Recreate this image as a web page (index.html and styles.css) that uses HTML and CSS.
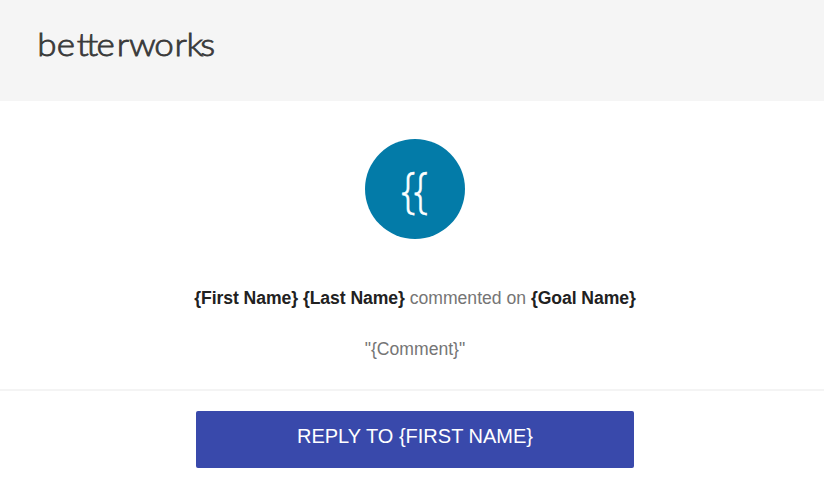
FILE: index.html
```html
<!DOCTYPE html>
<html lang="en">
<head>
<meta charset="utf-8">
<title>Betterworks</title>
<link rel="stylesheet" href="styles.css">
</head>
<body>
<header class="header">
  <svg class="logo" width="190" height="40" role="img" aria-label="betterworks">
    <text class="wordmark" transform="scale(1.13 1)" x="0.2 17.4 35.2 43.6 52.7 70.6 81.4 103.7 121.6 132.4 144.4" y="29">betterworks</text>
  </svg>
</header>
<main>
  <section class="message">
    <div class="avatar"><span class="initials">{{</span></div>
    <p class="summary"><strong>{First Name}</strong> <strong>{Last Name}</strong> commented on <strong>{Goal Name}</strong></p>
    <p class="comment">"{Comment}"</p>
  </section>
  <section class="actions">
    <a class="reply">REPLY TO {FIRST NAME}</a>
  </section>
</main>
</body>
</html>
```
FILE: styles.css
```css
* { box-sizing: border-box; }
body {
  margin: 0;
  height: 477px;
  overflow: hidden;
  background: #fff;
  color: #757575;
  font-family: "Liberation Sans", Arial, sans-serif;
  font-size: 17.6px;
}
.header {
  height: 101px;
  padding: 27px 0 0 37px;
  background: #f5f5f5;
}
.logo { display: block; overflow: visible; }
.wordmark {
  font-family: Lato, sans-serif;
  font-size: 31px;
  font-weight: 300;
  fill: #3a3a3a;
  stroke: #3a3a3a;
  stroke-width: 0.8px;
}
.message {
  display: flex;
  flex-direction: column;
  align-items: center;
  height: 290px;
  padding: 38px 0 0 6px;
  border-bottom: 2px solid #f4f4f4;
}
.avatar {
  display: flex;
  align-items: center;
  justify-content: center;
  width: 100px;
  height: 100px;
  border-radius: 50%;
  background: #037ba8;
  color: #fff;
}
.initials {
  font-family: "Open Sans", sans-serif;
  font-size: 49px;
  font-weight: 300;
  line-height: 60px;
  letter-spacing: -2px;
  -webkit-text-stroke: 0.6px #fff;
  transform: translate(-1.5px, -0.5px) scaleX(0.82);
}
.summary, .comment { margin: 0; line-height: 26px; white-space: nowrap; }
.summary { margin-top: 46px; }
.summary strong { color: #212121; letter-spacing: -0.07px; }
.comment { margin-top: 25px; }
.actions {
  display: flex;
  justify-content: center;
  padding: 20px 0 0 6px;
}
.reply {
  width: 438px;
  height: 57px;
  border-radius: 2px;
  background: #3949ab;
  color: #fff;
  font-size: 20px;
  line-height: 50px;
  text-align: center;
}
```
